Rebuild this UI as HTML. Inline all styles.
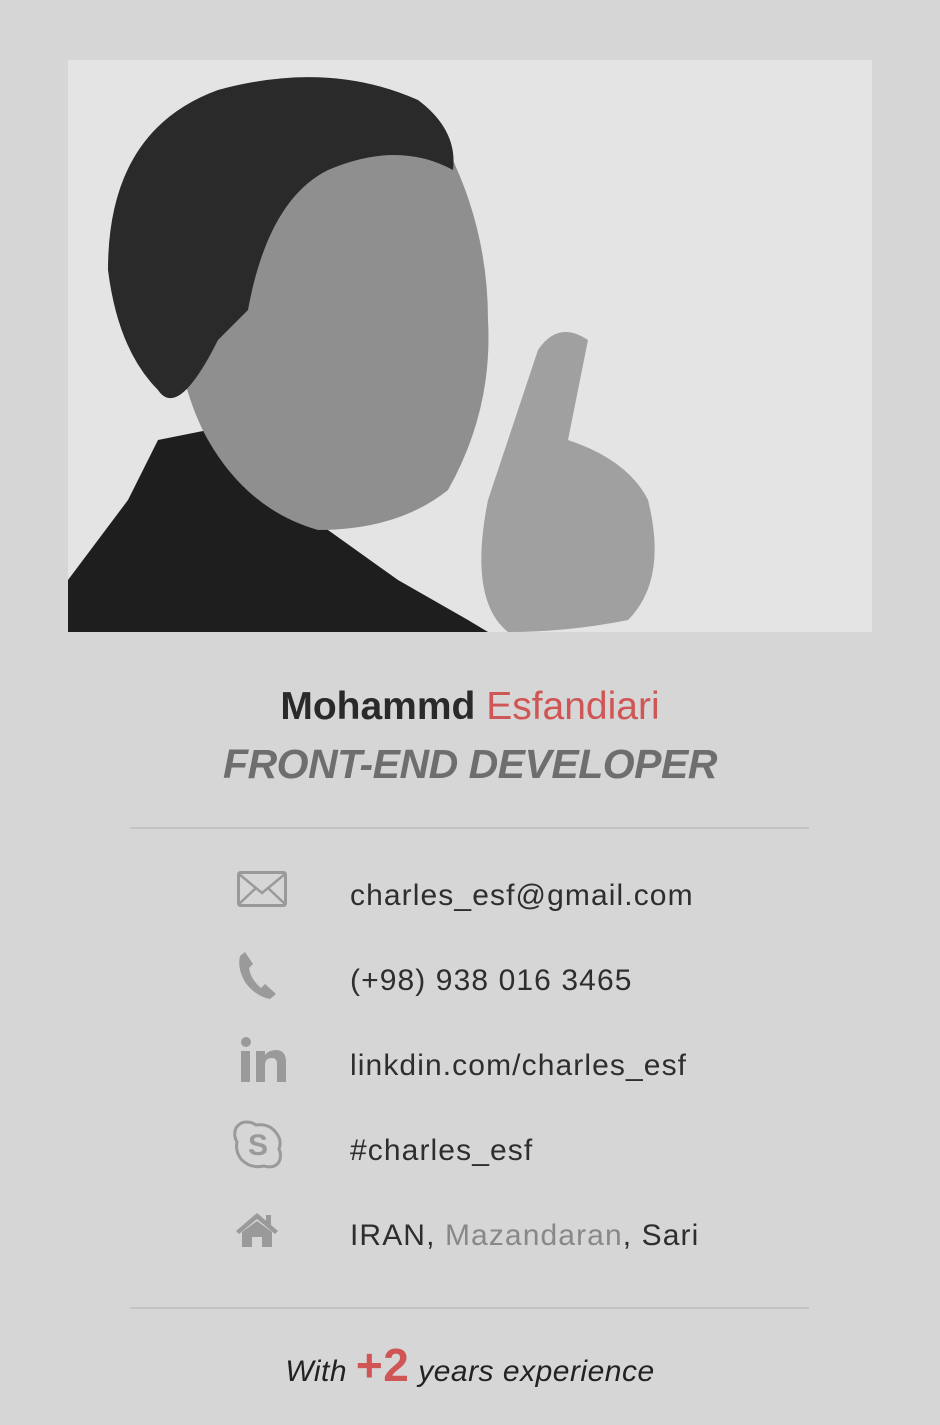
<!DOCTYPE html>
<html><head><meta charset="utf-8"><style>
html,body{margin:0;padding:0}
body{width:940px;height:1425px;background:#d6d6d6;font-family:"Liberation Sans",sans-serif;position:relative;overflow:hidden}
.photo{position:absolute;left:68px;top:60px;width:804px;height:572px;background:#e3e3e3;overflow:hidden}
.name{position:absolute;top:685px;left:0;width:940px;text-align:center;font-size:39px;color:#2a2a2a}
.name b{font-weight:bold}
.name span{color:#d05555}
.role{position:absolute;top:741px;left:0;width:940px;text-align:center;font-size:41px;font-weight:bold;font-style:italic;color:#6e6e6e;letter-spacing:-0.5px}
.hr{position:absolute;left:130px;width:679px;height:2px;background:#c4c4c4}
.row{position:absolute;left:350px;font-size:30px;color:#2e2e2e;letter-spacing:1.1px}
.ic{position:absolute}
.foot{position:absolute;top:1338px;left:0;width:940px;text-align:center;font-size:30px;font-style:italic;color:#222;letter-spacing:0.5px}
.foot span{color:#d05555;font-size:46px;font-style:normal;font-weight:bold}
</style></head><body>
<div class="photo">
<svg width="804" height="572" viewBox="0 0 804 572">
<rect width="804" height="572" fill="#e4e4e4"/>
<path d="M0 520 L60 440 L90 380 L140 370 L200 430 L260 470 L330 520 L400 560 L420 572 L0 572Z" fill="#1e1e1e"/>
<path d="M100 130 Q110 40 230 20 Q330 10 380 90 Q420 170 420 260 Q425 350 380 430 Q330 470 250 470 Q180 450 140 380 Q95 300 100 130Z" fill="#8f8f8f"/>
<path d="M40 210 Q40 70 150 30 Q260 0 350 40 Q390 70 385 110 Q330 80 260 110 Q200 140 180 250 L150 280 Q110 360 90 330 Q50 290 40 210Z" fill="#2a2a2a"/>
<path d="M420 440 L470 290 Q490 260 520 280 L500 380 Q560 400 580 440 Q600 520 560 560 Q500 572 440 572 Q400 540 420 440Z" fill="#a0a0a0"/>
</svg>
</div>
<div class="name"><b>Mohammd</b> <span>Esfandiari</span></div>
<div class="role">FRONT-END DEVELOPER</div>
<div class="hr" style="top:827px"></div>

<svg class="ic" style="left:237px;top:871px" width="50" height="36" viewBox="0 0 50 36"><rect x="1.5" y="1.5" width="47" height="33" rx="2" fill="none" stroke="#9a9a9a" stroke-width="3"/><path d="M2 3 L25 22 L48 3 M2 33 L19 17 M48 33 L31 17" fill="none" stroke="#9a9a9a" stroke-width="2.5"/></svg>
<div class="row" style="top:879px">charles_esf@gmail.com</div>

<svg class="ic" style="left:237px;top:950px" width="42" height="50" viewBox="0 0 42 50"><path d="M8 2 L16 14 L12 18 Q14 30 24 38 L28 34 L39 44 L33 49 Q18 46 8 32 Q0 18 3 6Z" fill="#9a9a9a"/></svg>
<div class="row" style="top:964px">(+98) 938 016 3465</div>

<svg class="ic" style="left:238px;top:1036px" width="50" height="48" viewBox="0 0 50 48"><circle cx="8" cy="6" r="5" fill="#9a9a9a"/><rect x="3" y="15" width="9" height="31" fill="#9a9a9a"/><path d="M18 15 H27 V19 Q31 14 38 14 Q48 14 48 26 V46 H39 V28 Q39 22 34 22 Q27 22 27 29 V46 H18Z" fill="#9a9a9a"/></svg>
<div class="row" style="top:1049px">linkdin.com/charles_esf</div>

<svg class="ic" style="left:232px;top:1119px" width="52" height="52" viewBox="0 0 52 52"><path d="M14 3 Q20 3 24 6 Q38 4 45 15 Q50 22 47 30 Q50 36 47 43 Q42 50 32 47 Q18 50 9 40 Q3 32 5 23 Q1 16 4 9 Q8 3 14 3Z" fill="none" stroke="#9a9a9a" stroke-width="3"/><text x="26" y="36" text-anchor="middle" font-family="Liberation Sans" font-weight="bold" font-size="30" fill="#9a9a9a">S</text></svg>
<div class="row" style="top:1134px">#charles_esf</div>

<svg class="ic" style="left:235px;top:1212px" width="44" height="36" viewBox="0 0 44 36"><path d="M22 1 L43 19 L40 22 L22 7 L4 22 L1 19Z" fill="#9a9a9a"/><rect x="31" y="3" width="5" height="10" fill="#9a9a9a"/><path d="M7 20 L22 9 L37 20 V35 H27 V25 H17 V35 H7Z" fill="#9a9a9a"/></svg>
<div class="row" style="top:1219px">IRAN, <span style="color:#888">Mazandaran</span>, Sari</div>

<div class="hr" style="top:1307px"></div>
<div class="foot">With <span>+2</span> years experience</div>
</body></html>
